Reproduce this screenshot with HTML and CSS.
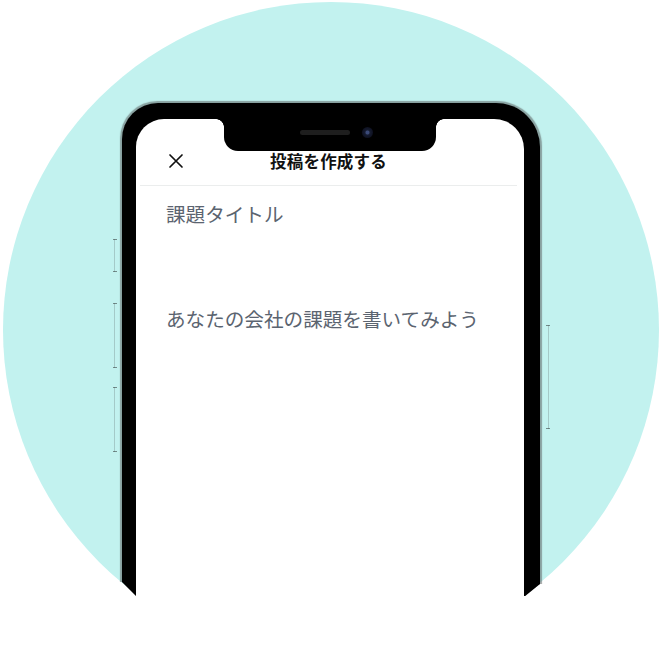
FILE: index.html
```html
<!DOCTYPE html>
<html lang="ja">
<head>
<meta charset="utf-8">
<title>投稿を作成する</title>
<link rel="stylesheet" href="styles.css">
</head>
<body>
<div class="stage">
  <div class="circle">
    <div class="phone">
      <span class="btn btn-l1"></span>
      <span class="btn btn-l2"></span>
      <span class="btn btn-l3"></span>
      <span class="btn btn-r1"></span>
      <div class="screen">
        <div class="notch">
          <span class="speaker"></span>
          <span class="camera"></span>
        </div>
        <header class="header">
          <svg class="close" viewBox="0 0 16 16" width="16" height="16" aria-hidden="true">
            <path d="M2 2 L14 14 M14 2 L2 14" stroke="#111" stroke-width="1.7" stroke-linecap="round" fill="none"/>
          </svg>
          <h1 class="title">投稿を作成する</h1>
          <span></span>
        </header>
        <div class="content">
          <p class="field field-title">課題タイトル</p>
          <p class="field field-body">あなたの会社の課題を書いてみよう</p>
        </div>
      </div>
    </div>
  </div>
</div>
</body>
</html>
```

FILE: styles.css
```css
* { box-sizing: border-box; }

html, body {
  margin: 0;
  padding: 0;
  background: #ffffff;
}

body {
  width: 663px;
  height: 662px;
  font-family: "Noto Sans CJK JP", "Noto Sans", sans-serif;
}

.stage {
  height: 596px;
  overflow: hidden;
  padding-top: 2px;
}

.circle {
  width: 656px;
  height: 656px;
  margin-left: 3px;
  border-radius: 50%;
  background: #c2f2ef;
  display: flex;
  justify-content: center;
  padding-top: 101px;
}

.phone {
  position: relative;
  width: 418px;
  height: 500px;
  padding: 16px 16px 0 14px;
  background: #000;
  border-radius: 36px 44px 0 0;
  box-shadow: 0 0 1px 1.5px rgba(90, 95, 95, 0.55);
  clip-path: polygon(-20px -10px, 440px -10px, 440px 481px, 418px 481px, 402px 494px, 14px 493px, 0 479px, -20px 479px);
}

.btn {
  position: absolute;
  width: 3px;
  border-left: 1px solid rgba(110, 130, 130, 0.35);
}
.btn::before,
.btn::after {
  content: "";
  position: absolute;
  left: -2px;
  width: 4px;
  height: 1px;
  background: rgba(60, 70, 70, 0.6);
}
.btn::before { top: 0; }
.btn::after { bottom: 0; }

.btn-l1 { left: -8px; top: 136px; height: 33px; }
.btn-l2 { left: -8px; top: 200px; height: 65px; }
.btn-l3 { left: -8px; top: 284px; height: 65px; }
.btn-r1 { right: -9px; top: 222px; height: 104px; border-left: 0; border-right: 1px solid rgba(110, 130, 130, 0.35); }
.btn-r1::before, .btn-r1::after { left: auto; right: -2px; }

.screen {
  position: relative;
  height: 100%;
  background: #ffffff;
  border-radius: 28px 30px 0 0;
}

.notch {
  position: absolute;
  top: 0;
  left: 50%;
  transform: translateX(-50%);
  width: 212px;
  height: 32px;
  background: #000;
  border-radius: 0 0 14px 14px;
  display: flex;
  justify-content: center;
  align-items: center;
  gap: 12px;
  padding-left: 12px;
}
.notch::before,
.notch::after {
  content: "";
  position: absolute;
  top: 0;
  width: 8px;
  height: 8px;
}
.notch::before {
  left: -8px;
  background: radial-gradient(circle at 0 100%, transparent 7.5px, #000 8px);
}
.notch::after {
  right: -8px;
  background: radial-gradient(circle at 100% 100%, transparent 7.5px, #000 8px);
}

.speaker {
  width: 50px;
  height: 5px;
  border-radius: 3px;
  background: #1e1e1e;
  margin-top: -6px;
}
.camera {
  width: 11px;
  height: 11px;
  border-radius: 50%;
  background: radial-gradient(circle at 50% 50%, #3b4a78 0 1.5px, #161c30 2.5px, #0d1020 5.5px);
  margin-top: -6px;
}

.header {
  display: grid;
  grid-template-columns: 1fr auto 1fr;
  align-items: center;
  margin: 0 7px 0 4px;
  padding: 30px 28px 12px;
  border-bottom: 1px solid #ebeded;
}

.close {
  display: block;
  width: 16px;
  height: 16px;
}

.title {
  margin: 0;
  font-size: 16.5px;
  line-height: 24px;
  font-weight: 700;
  color: #111;
  letter-spacing: 0.2px;
}

.content {
  padding: 14px 0 0 30px;
}

.field {
  margin: 0;
  font-size: 19.6px;
  line-height: 28px;
  color: #5b6470;
  font-weight: 400;
}

.field-body {
  margin-top: 77px;
}
```
